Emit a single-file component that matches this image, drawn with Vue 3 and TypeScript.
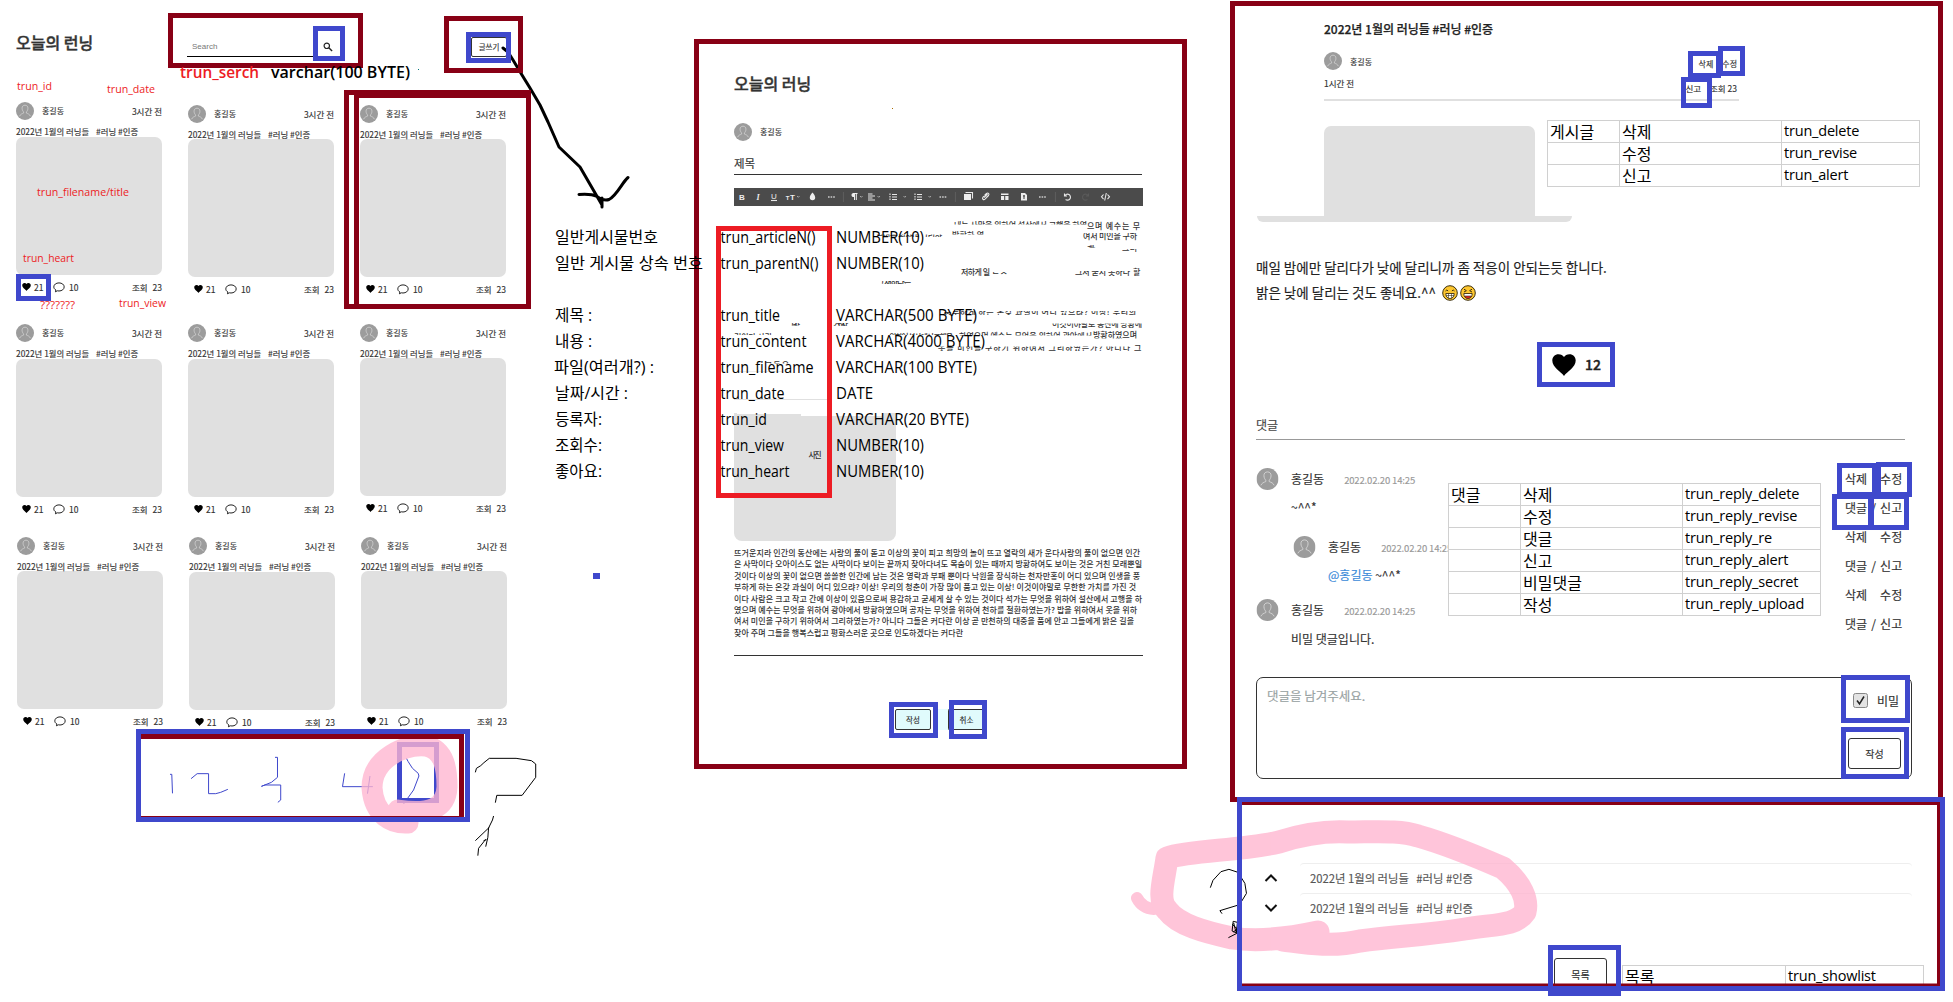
<script setup lang="ts">
interface Card { id: number; lower: boolean; tight: boolean }
interface Row { name: string; cards: Card[] }
interface Note { t: string; x: number; y: number; w: number; c?: string }
interface Frame { x: number; y: number; w: number; h: number; k?: string }

const rows: Row[] = [
  { name: 'first', cards: [{ id: 1, lower: false, tight: false }, { id: 2, lower: true, tight: true }, { id: 3, lower: true, tight: true }] },
  { name: 'second', cards: [{ id: 4, lower: false, tight: false }, { id: 5, lower: false, tight: false }, { id: 6, lower: false, tight: true }] },
  { name: 'third', cards: [{ id: 7, lower: false, tight: true }, { id: 8, lower: false, tight: false }, { id: 9, lower: false, tight: true }] },
]

const paragraph: { t: string; w: number }[] = [
  { t: '뜨거운지라 인간의 동산에는 사랑의 풀이 돋고 이상의 꽃이 피고 희망의 놀이 뜨고 열락의 새가 운다사랑의 풀이 없으면 인간', w: 406 },
  { t: '은 사막이다 오아이스도 없는 사막이다 보이는 끝까지 찾아다녀도 목숨이 있는 때까지 방황하여도 보이는 것은 거친 모래뿐일', w: 408 },
  { t: '것이다 이상의 꽃이 없으면 쓸쓸한 인간에 남는 것은 영락과 부패 뿐이다 낙원을 장식하는 천자만홍이 어디 있으며 인생을 풍', w: 406 },
  { t: '부하게 하는 온갖 과실이 어디 있으랴? 이상! 우리의 청춘이 가장 많이 품고 있는 이상! 이것이야말로 무한한 가치를 가진 것', w: 402 },
  { t: '이다 사람은 크고 작고 간에 이상이 있음으로써 용감하고 굳세게 살 수 있는 것이다 석가는 무엇을 위하여 설산에서 고행을 하', w: 408 },
  { t: '였으며 예수는 무엇을 위하여 광야에서 방황하였으며 공자는 무엇을 위하여 천하를 철환하였는가? 밥을 위하여서 옷을 위하', w: 403 },
  { t: '여서 미인을 구하기 위하여서 그리하였는가? 아니다 그들은 커다란 이상 곧 만천하의 대중을 품에 안고 그들에게 밝은 길을', w: 400 },
  { t: '찾아 주며 그들을 행복스럽고 평화스러운 곳으로 인도하겠다는 커다란', w: 229 },
]

const postTable = [['게시글', '삭제', 'trun_delete'], ['', '수정', 'trun_revise'], ['', '신고', 'trun_alert']]
const replyTable = [
  ['댓글', '삭제', 'trun_reply_delete'], ['', '수정', 'trun_reply_revise'], ['', '댓글', 'trun_reply_re'],
  ['', '신고', 'trun_reply_alert'], ['', '비밀댓글', 'trun_reply_secret'], ['', '작성', 'trun_reply_upload'],
]

const fields: Note[] = [
  { t: '일반게시물번호', x: 555, y: 243, w: 103 },
  { t: '일반 게시물 상속 번호', x: 555, y: 269, w: 148 },
  { t: '제목 :', x: 555, y: 321, w: 37 },
  { t: '내용 :', x: 555, y: 347, w: 37 },
  { t: '파일(여러개?) :', x: 554, y: 373, w: 100 },
  { t: '날짜/시간 :', x: 555, y: 399, w: 73 },
  { t: '등록자:', x: 555, y: 425, w: 47 },
  { t: '조회수:', x: 555, y: 451, w: 47 },
  { t: '좋아요:', x: 555, y: 477, w: 47 },
  { t: 'trun_articleN()', x: 720.5, y: 243, w: 95 },
  { t: 'trun_parentN()', x: 720.5, y: 269, w: 98 },
  { t: 'trun_title', x: 720.5, y: 321, w: 59.5 },
  { t: 'trun_content', x: 720.5, y: 347, w: 86 },
  { t: 'trun_filename', x: 720.5, y: 373, w: 93 },
  { t: 'trun_date', x: 720.5, y: 399, w: 64 },
  { t: 'trun_id', x: 720.5, y: 425, w: 46.5 },
  { t: 'trun_view', x: 720.5, y: 451, w: 63.5 },
  { t: 'trun_heart', x: 720.5, y: 477, w: 69 },
  { t: 'NUMBER(10)', x: 836, y: 243, w: 88 },
  { t: 'NUMBER(10)', x: 836, y: 269, w: 88 },
  { t: 'VARCHAR(500 BYTE)', x: 836, y: 321, w: 141 },
  { t: 'VARCHAR(4000 BYTE)', x: 836, y: 347, w: 149 },
  { t: 'VARCHAR(100 BYTE)', x: 836, y: 373, w: 141 },
  { t: 'DATE', x: 836, y: 399, w: 37 },
  { t: 'VARCHAR(20 BYTE)', x: 836, y: 425, w: 133 },
  { t: 'NUMBER(10)', x: 836, y: 451, w: 88 },
  { t: 'NUMBER(10)', x: 836, y: 477, w: 88 },
]

const redNotes: Note[] = [
  { t: 'trun_id', x: 17, y: 90, w: 35 },
  { t: 'trun_date', x: 107, y: 93, w: 48 },
  { t: 'trun_filename/title', x: 37, y: 196, w: 92 },
  { t: 'trun_heart', x: 23, y: 262, w: 51 },
  { t: '???????', x: 40, y: 308.5, w: 35 },
  { t: 'trun_view', x: 119, y: 307, w: 47 },
]

/* remains of the first paragraph: only the band from `top` to `bottom` is kept */
const remains: { t: string; x: number; y: number; w: number; top: number; bottom: number }[] = [
  { t: '내는 사막을 위하여 설산에서 고행을 하였', x: 954, y: 228, w: 133, top: 221, bottom: 224.5 },
  { t: '으며 예수는 무', x: 1087, y: 228.5, w: 53, top: 220, bottom: 231 },
  { t: '방황하 였', x: 952, y: 238, w: 32, top: 231, bottom: 234.5 },
  { t: '여서 미인을 구하', x: 1083, y: 239, w: 54, top: 233, bottom: 241 },
  { t: '무엇을 위하여 그리하', x: 876, y: 239, w: 66, top: 234.5, bottom: 237 },
  { t: '게 는', x: 1087, y: 252, w: 9, top: 245, bottom: 247.5 },
  { t: '그러', x: 1122, y: 251, w: 15, top: 249, bottom: 252 },
  { t: '저하게 일', x: 961, y: 274.5, w: 29, top: 266, bottom: 276 },
  { t: '는 것', x: 992, y: 273, w: 15, top: 272, bottom: 275 },
  { t: '그저 굳시 못하나', x: 1075, y: 274.5, w: 55, top: 271, bottom: 276 },
  { t: '할', x: 1133, y: 274.5, w: 8, top: 266, bottom: 277 },
  { t: '그 새하나는', x: 877, y: 285, w: 34, top: 281, bottom: 284 },
  { t: '풍부하게 하는 온갖 과실이 어디 있으랴? 이상! 우리의', x: 944, y: 315, w: 192, top: 311, bottom: 315 },
  { t: '사랑', x: 790, y: 329, w: 10, top: 323, bottom: 325.5 },
  { t: '거친 사', x: 833, y: 327, w: 15, top: 323, bottom: 326 },
  { t: '이것이야말로 동산에 방황에', x: 1052, y: 327, w: 90, top: 323.5, bottom: 328 },
  { t: '것이다 사람', x: 734, y: 340, w: 38, top: 333, bottom: 335 },
  { t: '위하여 설산에서 고행을', x: 889, y: 340, w: 64, top: 332, bottom: 335 },
  { t: '하였으며 예수는 무엇을 위하여 광야에서', x: 959, y: 338.5, w: 133, top: 331, bottom: 335.5 },
  { t: '방황하였으며', x: 1093, y: 338, w: 44, top: 330, bottom: 338.5 },
  { t: '옷을 미인을 구하기 위하여서 그리하였는가? 아니다', x: 938, y: 350.5, w: 192, top: 346.5, bottom: 351 },
  { t: '그', x: 1134, y: 350.5, w: 7, top: 342, bottom: 352 },
  { t: '그들은', x: 765, y: 368, w: 24, top: 361, bottom: 363.5 },
]

const frames: Frame[] = [
  { x: 168, y: 13, w: 195, h: 55 }, { x: 313, y: 26, w: 32, h: 35, k: 'blue' },
  { x: 444, y: 16, w: 79, h: 57 }, { x: 466, y: 32, w: 45, h: 31, k: 'blue' },
  { x: 344, y: 90, w: 187, h: 219, k: 'thin' }, { x: 354, y: 93, w: 177, h: 216 },
  { x: 16, y: 274, w: 35, h: 27, k: 'blue' },
  { x: 694, y: 39, w: 493, h: 730 }, { x: 716, y: 226, w: 116, h: 272, k: 'red' },
  { x: 889, y: 702, w: 49, h: 36, k: 'blue' }, { x: 949, y: 700, w: 38, h: 39, k: 'blue' },
  { x: 1230, y: 1, w: 713, h: 801 },
  { x: 1688, y: 51, w: 33, h: 27, k: 'blue' }, { x: 1718, y: 46, w: 27, h: 30, k: 'blue' }, { x: 1681, y: 77, w: 31, h: 31, k: 'blue' },
  { x: 1537, y: 342, w: 78, h: 45, k: 'blue' },
  { x: 1837, y: 463, w: 40, h: 34, k: 'blue' }, { x: 1876, y: 462, w: 36, h: 35, k: 'blue' },
  { x: 1832, y: 494, w: 41, h: 36, k: 'blue' }, { x: 1869, y: 494, w: 40, h: 36, k: 'blue' },
  { x: 1841, y: 675, w: 69, h: 48, k: 'blue' }, { x: 1841, y: 727, w: 68, h: 52, k: 'blue' },
  { x: 136, y: 729, w: 334, h: 93, k: 'blue' },
  { x: 1548, y: 945, w: 73, h: 51, k: 'blue' }, { x: 1237, y: 797, w: 708, h: 194, k: 'blue' },
]
</script>

<template>
  <main class="board">
    <svg width="0" height="0" class="defs">
      <defs>
        <symbol id="avatar" viewBox="0 0 18 18">
          <circle cx="9" cy="9" r="9" fill="#9c9c9c" />
          <path d="M9 3.2c-2 0-3 1.4-2.9 3.2.1 1.700.7 2.700 1.500 3.500v1.200c-1.600.7-3.300 1.100-4 3.100M9 3.200c2 0 3 1.400 2.900 3.200-.1 1.700-.7 2.700-1.500 3.500v1.200c1.600.7 3.300 1.100 4 3.100" fill="none" stroke="#d8d8d8" stroke-width=".7" />
        </symbol>
        <symbol id="heart" viewBox="0 0 24 22">
          <path d="M12 22C9 17.500.3 13.500.3 6.500.3 2.800 3 .2 6.500.2 9 .2 11 1.300 12 3c1-1.700 3-2.800 5.500-2.800 3.500 0 6.200 2.600 6.200 6.300C23.700 13.500 15 17.500 12 22Z" fill="#000" />
        </symbol>
        <symbol id="bubble" viewBox="0 0 12 11">
          <path d="M2.400 9.800 2.900 8C1.500 7.200.8 6.200.8 4.900.8 2.600 3.100.9 6 .9s5.200 1.700 5.200 4S8.900 9 6 9c-.6 0-1.200-.1-1.700-.2Z" fill="none" stroke="#222" stroke-width="1" />
        </symbol>
      </defs>
    </svg>

    <section class="gallery">
      <header class="gallery-head">
        <h1>오늘의 런닝</h1>
        <div class="search">
          <span>Search</span>
          <svg width="10" height="10" viewBox="0 0 10 10"><circle cx="3.800" cy="3.800" r="2.700" fill="none" stroke="#222" stroke-width="1.200" /><path d="m5.800 5.800 3.300 3.300" stroke="#222" stroke-width="1.400" /></svg>
        </div>
        <button class="write">글쓰기</button>
      </header>
      <div v-for="row in rows" :key="row.name" class="row" :class="row.name">
        <article v-for="card in row.cards" :key="card.id" class="card" :class="{ lower: card.lower, tight: card.tight }">
          <div class="card-head">
            <svg width="18" height="18"><use href="#avatar" /></svg>
            <span class="who">홍길동</span>
            <time>3시간 전</time>
          </div>
          <p class="card-title">2022년 1월의 러닝들 <b>#러닝 #인증</b></p>
          <div class="thumb"></div>
          <div class="card-foot">
            <svg class="h" width="9" height="8"><use href="#heart" /></svg><span class="likes">21</span>
            <svg class="c" width="12" height="11"><use href="#bubble" /></svg><span>10</span>
            <span class="views">조회 <i>23</i></span>
          </div>
        </article>
      </div>
    </section>

    <section class="editor">
      <h1>오늘의 러닝</h1>
      <div class="author">
        <svg width="18" height="18"><use href="#avatar" /></svg><span>홍길동</span>
      </div>
      <div class="subject">제목</div>
      <div class="toolbar">
        <svg width="409" height="18" viewBox="0 0 409 18" fill="none" stroke="#e8e8e8" stroke-width="1.100">
          <g fill="#eee" stroke="none" font-size="8" text-anchor="middle">
            <text x="8" y="11.500" font-weight="700">B</text>
            <text x="24" y="11.500" font-style="italic" font-weight="700" font-family="Liberation Serif">I</text>
            <text x="40" y="11">U</text>
            <text x="53.500" y="11.500" font-size="6" font-weight="700">T</text><text x="58.500" y="11.500" font-weight="700">T</text>
            <path d="M78.500 4.500c1.500 2 2.700 3.200 2.700 5a2.700 2.700 0 0 1-5.400 0c0-1.800 1.200-3 2.700-5Z" />
            <path d="M119 5h4.500v1h-.7v6h-1V6h-.8v6h-1V9a2 2 0 0 1-1-4Z" />
            <path d="M230 6h7v6h-7zM267 5.500h7.500V12H267z" />
            <path d="M287 5h4l2 2v5.500h-6z" />
          </g>
          <path d="M37 12.500h6" />
          <path stroke="#ccc" stroke-width="1.600" stroke-dasharray="1.600 1" d="M94 9h7M205.500 9h7M305 9h7" />
          <path stroke="#bbb" stroke-width=".8" d="m63 8 1.300 1.300L65.500 8M126 8l1.300 1.300L128.500 8M143.500 8l1.300 1.300L146 8M169.500 8l1.300 1.300L172 8M194.500 8l1.300 1.300L197 8" />
          <path d="M134 6h4.500M134 8h7M134 10h4.500M134 12h7M158 6.500h5M158 9h5M158 11.500h5M183 6.500h5M183 9h5M183 11.500h5" />
          <path stroke-dasharray="1.500 1" d="M156 5.500v7M181 5.500v7" />
          <path d="M231.500 4.500h7v6" />
          <path d="m250 9.500 3.500-3.500M250.500 7.500l2-2c1.500-1.300 3.300.5 2 2l-2 2M253 9.200l-2 2c-1.500 1.300-3.300-.5-2-2l1-1" />
          <path stroke="#4b4b4b" d="M267 7.500h8M270.700 7.500V12M289 8h2M290 7v4" />
          <path stroke="#5c5c5c" d="M109.500 4v10M221.500 4v10M321.500 4v10" />
          <path d="M330.500 5.500v2.500h2.500M330.800 7.800a3 3 0 1 1 .8 3.700" />
          <path stroke="#5a5a5a" d="M354.500 5.500v2.500H352M354.200 7.800a3 3 0 1 0-.8 3.700" />
          <path d="m369.500 6.500-2 2.300 2 2.300M373.500 6.500l2 2.300-2 2.300M372.300 5l-1.600 7.500" />
        </svg>
      </div>
      <div class="picture"></div>
      <div class="text">
        <svg v-for="line in paragraph" :key="line.t" width="409" height="11.400"><text x="0" y="9" :textLength="line.w">{{ line.t }}</text></svg>
      </div>
      <div class="buttons"><button>작성</button><span></span><button class="cancel">취소</button></div>
    </section>

    <section class="detail">
      <div class="post-head">
        <h2>2022년 1월의 러닝들 #러닝 #인증</h2>
        <div class="post-line one">
          <svg width="18" height="18"><use href="#avatar" /></svg><span class="who">홍길동</span>
          <span class="ops"><span>삭제</span><span>수정</span></span>
        </div>
        <div class="post-line two">
          <span>1시간 전</span>
          <span class="ops"><span>신고</span><span>조회 23</span></span>
        </div>
      </div>
      <div class="photo"></div>
      <div class="photo-base"></div>
      <p class="body">매일 밤에만 달리다가 낮에 달리니까 좀 적응이 안되는듯 합니다.</p>
      <p class="body">밝은 낮에 달리는 것도 좋네요.^^
        <svg v-for="n in 2" :key="n" width="16" height="16" viewBox="0 0 16 16">
          <circle cx="8" cy="8" r="7.300" fill="#fdc62f" stroke="#3d3010" stroke-width="1" />
          <path v-if="n === 1" d="M3.500 6q1.300-2 2.600 0M9.900 6q1.300-2 2.600 0" fill="none" stroke="#3d3010" />
          <path v-else d="m4 4.200 2.400 1.500L4 7M12 4.200 9.600 5.700 12 7" fill="none" stroke="#3d3010" />
          <path d="M3.800 8.500h8.400c0 3-1.700 5-4.200 5s-4.200-2-4.200-5Z" fill="#fff" stroke="#3d3010" stroke-width=".9" />
          <path v-if="n === 1" d="M4 10.500h8M6.500 8.500v5M9.500 8.500v5" stroke="#3d3010" stroke-width=".6" />
          <path v-else d="M4.700 11h6.600c-.6 1.600-1.700 2.500-3.300 2.500S5.300 12.600 4.700 11Z" fill="#d22" stroke="#3d3010" stroke-width=".6" />
        </svg>
      </p>
      <div class="like"><svg width="24" height="22"><use href="#heart" /></svg><span>12</span></div>
      <h3>댓글</h3>
      <div class="comments">
        <div class="list">
          <div class="comment">
            <svg width="23" height="22" viewBox="0 0 18 18"><use href="#avatar" width="18" height="18" /></svg>
            <div><p class="meta">홍길동<time>2022.02.20 14:25</time></p><p class="msg">~^^*</p></div>
          </div>
          <div class="comment reply">
            <svg width="23" height="22" viewBox="0 0 18 18"><use href="#avatar" width="18" height="18" /></svg>
            <div><p class="meta">홍길동<time>2022.02.20 14:25</time></p><p class="msg"><em>@홍길동</em> ~^^*</p></div>
          </div>
          <div class="comment last">
            <svg width="23" height="22" viewBox="0 0 18 18"><use href="#avatar" width="18" height="18" /></svg>
            <div><p class="meta">홍길동<time>2022.02.20 14:25</time></p><p class="msg">비밀 댓글입니다.</p></div>
          </div>
        </div>
        <div class="actions">
          <template v-for="n in 3" :key="n">
            <p><span>삭제</span><i></i><span>수정</span></p>
            <p><span>댓글</span><i>/</i><span>신고</span></p>
          </template>
        </div>
      </div>
      <div class="reply-box">
        <span class="hint">댓글을 남겨주세요.</span>
        <div class="side">
          <label>
            <svg width="15" height="15" viewBox="0 0 15 15"><rect x=".5" y=".5" width="14" height="14" rx="2" fill="#e3e3e3" stroke="#888" /><path d="m4 7.500 2.500 3.300L11 3.500" fill="none" stroke="#222" stroke-width="1.500" /></svg>
            비밀
          </label>
          <button>작성</button>
        </div>
      </div>
      <div class="neighbours">
        <div class="neighbour"><svg width="14" height="8" viewBox="0 0 14 8"><path d="m1.500 7 5.500-5.500L12.500 7" /></svg><p>2022년 1월의 러닝들 <b>#러닝 #인증</b></p></div>
        <div class="neighbour"><svg width="14" height="8" viewBox="0 0 14 8"><path d="m1.500 1 5.500 5.500L12.500 1" /></svg><p>2022년 1월의 러닝들 <b>#러닝 #인증</b></p></div>
      </div>
      <button class="to-list">목록</button>
    </section>

    <table class="sheet post-sheet">
      <tr v-for="r in postTable" :key="r[2]"><td v-for="(c, i) in r" :key="i">{{ c }}</td></tr>
    </table>
    <table class="sheet reply-sheet">
      <tr v-for="r in replyTable" :key="r[2]"><td v-for="(c, i) in r" :key="i">{{ c }}</td></tr>
    </table>
    <table class="sheet list-sheet"><tr><td>목록</td><td>trun_showlist</td></tr></table>

    <svg class="ink" width="1953" height="1002" viewBox="0 0 1953 1002">
      <defs>
        <clipPath v-for="(r, i) in remains" :id="'band' + i" :key="i"><rect :x="r.x - 2" :y="r.top" :width="r.w + 4" :height="r.bottom - r.top" /></clipPath>
      </defs>

      <g class="remains">
        <g v-for="(r, i) in remains" :key="i" :clip-path="`url(#band${i})`"><text :x="r.x" :y="r.y" :textLength="r.w">{{ r.t }}</text></g>
        <text x="808.500" y="458" textLength="13">사진</text>
      </g>
      <path d="M734 399.500h93" stroke="#e0e0e0" />
      <path d="M740 371.500h42" stroke="#ececec" />

      <g class="marker">
        <path d="M1137 898q5 10 17 11" stroke-width="12" />
        <path d="M1318 932C1290 938 1258 942 1232 938 1205 932 1178 925 1167 910 1157 900 1164 880 1167 858 1190 850 1240 851 1279 842 1310 832 1330 831 1348 832 1375 832 1400 830 1418 836 1450 845 1480 858 1503 868 1522 884 1528 900 1525 912 1516 926 1495 924 1465 929 1420 936 1395 936 1360 941 1330 948 1300 942 1283 940" />
      </g>

      <rect x="397" y="742" width="42" height="61" class="pager-box" />
      <g class="pen" transform="translate(0 520) scale(.35714 .33333)">
        <path class="blue" d="M476 763h5l2 57M535 776l17-15h32v60h20l14-4 20-9M770 712h7v60l-17 15-28 12 10-4h44v45l-8 7M965 760l-6 40h85M1036 768l-7 53M1138 715l5 10 12 20 16 15 2 8-15 42-16 24-12 18" />
        <path d="m1331 757 3-12 12-8 9-9 15-13h75l43 7 12 10v40l-38 54h-71l-4 22M1382 888l-3 12-11 24-2 28-6 28M1370 922l-39 40M1360 958l-20 27-2 22M1354 962l8-3" />
      </g>
      <path class="marker round" d="M426 746C405 744 372 758 372 788 374 815 392 824 408 823M426 746C445 750 447 770 447 787 446 808 430 815 398 810" />
      <path d="M141 736.500h320.500V817" fill="none" stroke="#880015" stroke-width="5" /><path d="M141 816.500h320" stroke="#880015" />
      <path d="M1242 803.500h696.500V985H1242" fill="none" stroke="#880015" stroke-width="3" />

      <g class="pen" transform="translate(1120 790) scale(.53135 .33333)">
        <path d="m170 293 5-22 15-26 15-7 17 9 13 33 3 30-13 34-37 18 4 9M213 394l8 3-2 32-8-6zM211 403l10 14-8 9M220 430l-16 13M214 399l4 26" />
      </g>
      <path class="arrow" d="M503 48l5 4 5 8 9 15 8 13 10 17 8 17 11 25 21 20 22 38M579 194.500q12-1 18 2 7 5 12 3c8-4 13-17 19-22M602 198v9" />

      <g class="frames">
        <rect v-for="(f, i) in frames" :key="i" :class="f.k" :x="f.x + 2.500" :y="f.y + 2.500" :width="f.w - 5" :height="f.h - 5" />
      </g>
      <g class="notes">
        <text v-for="(n, i) in fields" :key="i" :x="n.x" :y="n.y" :textLength="n.w" lengthAdjust="spacingAndGlyphs">{{ n.t }}</text>
        <g class="small"><text v-for="(n, i) in redNotes" :key="i" :x="n.x" :y="n.y" :textLength="n.w" lengthAdjust="spacingAndGlyphs">{{ n.t }}</text></g>
        <text class="strong red-text" x="180" y="78" textLength="79" lengthAdjust="spacingAndGlyphs">trun_serch</text>
        <text class="strong" x="271" y="78" textLength="139" lengthAdjust="spacingAndGlyphs">varchar(100 BYTE)</text>
      </g>
      <rect x="418" y="69" width="1" height="1" fill="#00747a" />
      <rect x="892" y="108" width="1" height="1" fill="#a86b00" />
      <rect x="593" y="573" width="7" height="6" fill="#3f48cc" />
    </svg>
  </main>
</template>

<style>
body { margin: 0; background: #fff; }
</style>

<style scoped>
.board { position: relative; display: flex; width: 1953px; height: 1002px; overflow: hidden; background: #fff; color: #333; font-family: "Noto Sans CJK KR", "Noto Sans", sans-serif; font-size: 8px; -webkit-text-stroke: .15px; }
.board * { box-sizing: border-box; }
h1, h2, h3, p { margin: 0; font-weight: 400; white-space: nowrap; }
b { font-weight: 400; }
i, em { font-style: normal; }
svg { display: block; flex: none; }
.defs { position: absolute; }
button { font: inherit; color: #333; background: #fff; border: 1px solid #333; border-radius: 2px; padding: 0; }
h1 { font-size: 16px; line-height: 20px; font-weight: 500; -webkit-text-stroke: .4px #333; }

.gallery { width: 694px; }
.gallery-head { display: flex; height: 102px; padding-left: 16px; }
.gallery-head h1 { width: 171px; margin-top: 32px; }
.search { display: flex; align-items: center; justify-content: space-between; width: 146px; height: 20px; margin-top: 37px; padding-left: 5px; border-bottom: 1px solid #000; font: 8px "Liberation Sans", sans-serif; color: #777; -webkit-text-stroke: 0; }
.write { width: 36px; height: 20px; margin: 37px 0 0 138px; font-size: 7.500px; line-height: 16px; }
.row { display: flex; align-items: flex-start; gap: 26px; padding-left: 16px; }
.first { height: 222px; }
.second { height: 213px; }
.third { padding-left: 17px; }
.card { width: 146px; }
.lower { margin-top: 3px; }
.card-head { display: flex; align-items: center; height: 18px; line-height: 18px; }
.who { margin-left: 8px; }
.card-head time { margin-left: auto; font-size: 8.500px; line-height: 17px; }
.card-title { height: 11px; margin-top: 5.500px; margin-bottom: .5px; font-size: 8.400px; line-height: 11px; }
.card-title b { margin-left: 5px; }
.tight .card-title { height: 10px; line-height: 10px; }
.thumb { height: 138px; border-radius: 7px; background: #e0e0e0; }
.card-foot { display: flex; align-items: center; height: 24px; font-size: 8.500px; line-height: 12px; }
.h { margin-left: 6px; }
.likes { margin-left: 3px; width: 19px; }
.c { margin-right: 4px; }
.views { margin-left: auto; }
.views i { margin-left: 3px; }

.editor { width: 536px; padding: 73px 0 0 40px; }
.author { display: flex; align-items: center; margin-top: 30px; line-height: 18px; }
.author span { margin-left: 8px; }
.subject { width: 408px; height: 25px; margin-top: 9px; padding-top: 5px; border-bottom: 1px solid #333; font-size: 11.500px; line-height: 17px; }
.toolbar { width: 409px; height: 18px; margin-top: 13px; background: #4b4b4b; font-family: "Liberation Sans", sans-serif; }
.picture { width: 162px; height: 128px; margin-top: 207px; border-radius: 0 0 8px 8px; background: #e0e0e0; clip-path: polygon(0 0, 3px 0, 3px 1px, 67px 1px, 67px 3px, 148px 3px, 148px 0, 100% 0, 100% 100%, 0 100%); }
.text { width: 409px; height: 115px; padding-top: 6px; border-bottom: 1px solid #333; }
.text svg { font-size: 8px; font-weight: 500; fill: #333; height: 11.400px; overflow: visible; }
.buttons { display: flex; height: 21px; margin: 53px 0 0 161px; font-size: 7.500px; }
.buttons button { width: 36px; height: 21px; background: #e0fbfc; line-height: 16px; }
.buttons span { width: 10px; margin-left: 7px; background: #e6fdff; }
.buttons .cancel { border-right: 0; }

.detail { width: 713px; height: 990px; padding: 19px 0 0 26px; }
.post-head { width: 415px; margin-left: 68px; height: 82px; border-bottom: 2px solid #e0e0e0; }
.post-head h2 { font-size: 12px; line-height: 19px; font-weight: 500; color: #222; -webkit-text-stroke: .25px; }
.post-line { display: flex; align-items: center; height: 18px; white-space: nowrap; }
.one { margin-top: 14px; }
.two { margin-top: 4px; height: 18px; font-size: 8.500px; }
.ops { display: flex; gap: 9px; margin: 5px 2px 0 auto; }
.two .ops { margin-top: 10px; }
.photo { width: 211px; height: 90px; margin: 25px 0 0 68px; border-radius: 7px 7px 0 0; background: #e0e0e0; }
.photo-base { width: 315px; height: 6px; margin-left: 1px; border-radius: 0 0 8px 8px; background: #e0e0e0; }
.body { display: flex; align-items: center; gap: 2px; height: 25px; font-size: 13.500px; line-height: 25px; color: #222; }
.photo-base + .body { margin-top: 33px; }
.body svg:first-of-type { margin-left: 4px; }
.like { display: flex; align-items: center; height: 22px; margin: 49px 0 0 296px; font-size: 14px; font-weight: 500; color: #222; -webkit-text-stroke: .4px; }
.like span { margin-left: 9px; line-height: 18px; padding-bottom: 2px; }
.detail h3 { width: 649px; height: 31px; margin-top: 33px; padding-top: 6px; border-bottom: 1px solid #999; font-size: 12px; line-height: 20px; color: #444; }
.comments { display: flex; height: 237px; font-size: 12px; }
.list { width: 589px; padding-top: 28px; }
.comment { display: flex; height: 68px; }
.comment > div { margin-left: 12px; }
.reply { margin-left: 37px; height: 63px; }
.meta { height: 22px; line-height: 22px; }
.meta time { margin-left: 20px; font-size: 9.500px; color: #999; letter-spacing: -.15px; }
.msg { margin-top: 7px; line-height: 20px; }
.last .msg { margin-top: 8px; }
.msg em { color: #3a8ad8; }
.actions { padding-top: 25px; }
.actions p { display: flex; height: 29px; line-height: 28px; }
.actions i { width: 13px; text-align: center; }
.reply-box { display: flex; justify-content: space-between; width: 656px; height: 102px; border: 1px solid #333; border-radius: 7px; }
.hint { margin: 8px 0 0 10px; font-size: 12.500px; line-height: 20px; color: #98a2a2; }
.side { width: 63px; padding-top: 14px; }
.side label { display: flex; align-items: center; gap: 9px; margin-left: 5px; height: 16px; font-size: 12px; }
.side button { display: block; width: 53px; height: 31px; margin-top: 30px; font-size: 10px; border-radius: 3px; }
.neighbours { margin-top: 84px; }
.neighbour { display: flex; align-items: center; height: 30px; margin-left: 8px; color: #555; }
.neighbour svg { fill: none; stroke: #111; stroke-width: 2; }
.neighbour p { width: 612px; height: 30px; margin-left: 22px; padding-left: 10px; border-top: 1px solid #eee; border-radius: 4px; font-size: 11.300px; line-height: 28px; }
.neighbour b { margin-left: 5px; }
.to-list { display: block; width: 53px; height: 32px; margin: 35px 0 0 298px; font-size: 10px; border-radius: 3px; }

.sheet { position: absolute; border-collapse: collapse; table-layout: fixed; background: #fff; color: #000; font-size: 16px; -webkit-text-stroke: 0; }
.sheet td { height: 22px; box-sizing: border-box; padding: 0 0 1px 2px; border: 1px solid #d0d0d0; line-height: 18px; white-space: nowrap; }
.sheet td:first-child { width: 72px; }
.sheet td:nth-child(2) { width: 162px; }
.sheet td:last-child { width: 138px; font-family: "Open Sans", "Noto Sans", sans-serif; font-size: 14.500px; letter-spacing: -.2px; }
.post-sheet { left: 1547px; top: 120px; width: 373px; }
.reply-sheet { left: 1448px; top: 483px; width: 373px; }
.list-sheet { left: 1622px; top: 965px; width: 301px; }
.sheet.list-sheet td:first-child { width: 163px; }

.ink { position: absolute; left: 0; top: 0; }
.remains { font-size: 8px; font-weight: 500; fill: #333; }
.marker { fill: none; stroke: #ffb5cf; stroke-width: 23; stroke-linecap: round; stroke-linejoin: round; opacity: .78; }
.round { stroke-width: 21; }
.pager-box { fill: none; stroke: #3f48cc; stroke-width: 5; transform: translate(2.500px, 2.500px); width: 37px; height: 56px; }
.pen path { fill: none; stroke: #000; stroke-width: 1; vector-effect: non-scaling-stroke; }
.pen .blue { stroke: #3f48cc; }
.arrow { fill: none; stroke: #000; stroke-width: 3; stroke-linecap: round; stroke-linejoin: round; }
.frames rect { fill: none; stroke: #880015; stroke-width: 5; }
.frames .blue { stroke: #3f48cc; }
.frames .red { stroke: #ed1c24; }
.notes { fill: #000; font-family: "Open Sans", "Noto Sans CJK KR", sans-serif; font-size: 15.500px; -webkit-text-stroke: 0; }
.small { fill: #ed1c24; font-size: 11.500px; }
.strong { font-size: 15.500px; font-weight: 600; }
.red-text { fill: #ed1c24; }
</style>
